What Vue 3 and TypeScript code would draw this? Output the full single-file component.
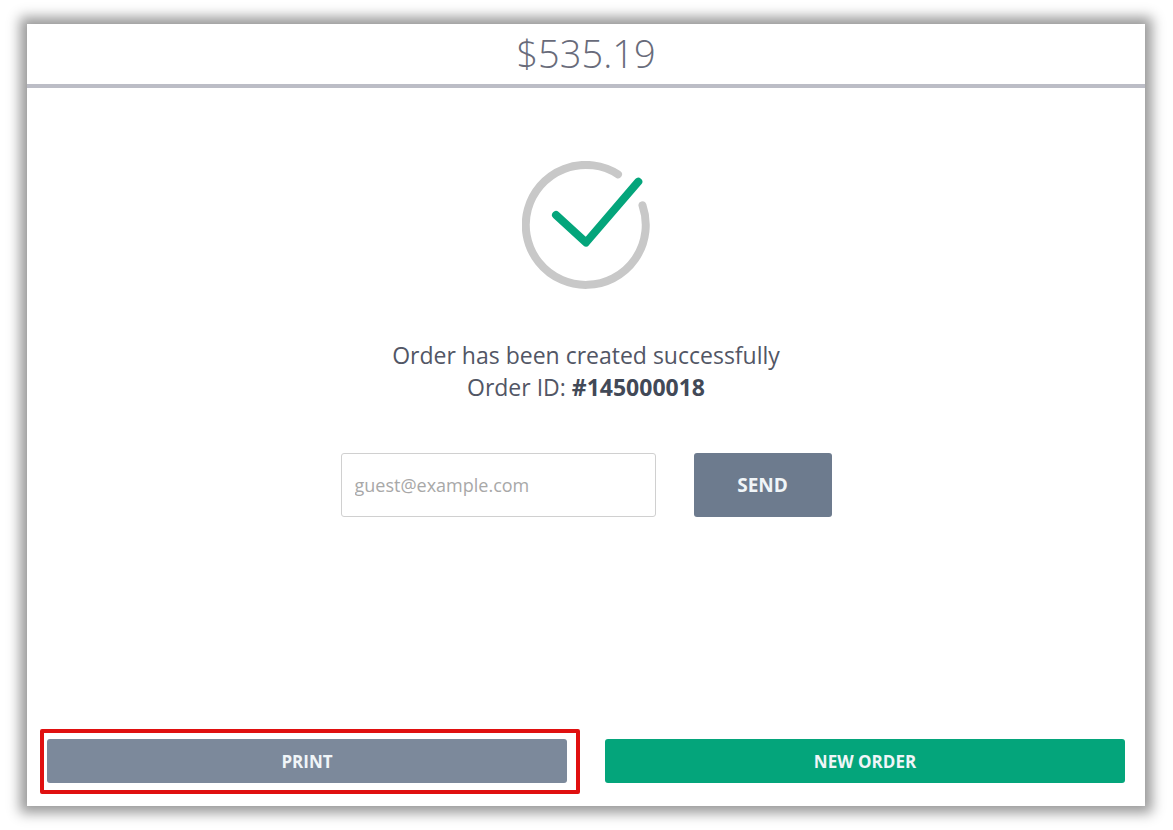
<script setup lang="ts">
import { ref } from 'vue'

const total = '$535.19'
const orderId = '#145000018'
const email = ref('')
</script>

<template>
  <div class="page">
    <main class="panel">
      <header class="total">
        <h1>{{ total }}</h1>
      </header>
      <section class="result">
        <svg class="check" viewBox="0 0 128 128" fill="none" stroke-width="8" stroke-linecap="round" aria-hidden="true">
          <path class="ring" d="M96 13.3A60 60 0 1 0 120.5 44.4" />
          <path class="tick" d="M34 54L64 81.5L116.3 20.7" stroke-linejoin="round" />
        </svg>
        <p class="message">
          Order has been created successfully<br />
          Order ID: <strong>{{ orderId }}</strong>
        </p>
        <form class="receipt" @submit.prevent>
          <input v-model="email" type="email" placeholder="guest@example.com" aria-label="Email address" />
          <button type="submit" class="send">SEND</button>
        </form>
      </section>
      <footer class="actions">
        <div class="highlight">
          <button type="button" class="print">PRINT</button>
        </div>
        <button type="button" class="new-order">NEW ORDER</button>
      </footer>
    </main>
  </div>
</template>

<style>
body {
  margin: 0;
  background: #fff;
}
</style>

<style scoped>
.page {
  box-sizing: border-box;
  min-height: 100vh;
  padding: 24px 28px 24px 27px;
  display: flex;
  font-family: "Open Sans", "Noto Sans", sans-serif;
  color: #525665;
}

.panel {
  flex: 1;
  display: flex;
  flex-direction: column;
  background: #fff;
  box-shadow: 0 0 12px 7px #999;
}

.total {
  height: 60px;
  display: flex;
  justify-content: center;
  border-bottom: 4px solid #bcbdc6;
}

h1 {
  margin: 0;
  font-size: 38px;
  font-weight: 300;
  line-height: 58px;
  color: #686b7a;
}

.result {
  flex: 1;
  display: flex;
  flex-direction: column;
  align-items: center;
  padding: 73px 20px 40px;
}

.check {
  width: 128px;
  height: 128px;
}

.ring {
  stroke: #c8c8c8;
}

.tick {
  stroke: #04a57b;
}

.message {
  margin: 50px 0;
  font-size: 23px;
  line-height: 32px;
  text-align: center;
}

.message strong {
  font-weight: 700;
  color: #424957;
}

.receipt {
  display: flex;
  gap: 38px;
}

input {
  box-sizing: border-box;
  width: 315px;
  height: 64px;
  padding: 0 13px;
  border: 1px solid #d0d0d0;
  border-radius: 3px;
  background: #fff;
  font: 400 18px "Open Sans", "Noto Sans", sans-serif;
  color: #525665;
}

input::placeholder {
  color: #a8a8a8;
  opacity: 1;
}

button {
  border: 0;
  border-radius: 3px;
  padding: 0;
  font: 700 17px "Open Sans", "Noto Sans", sans-serif;
  color: #f0f5f8;
  cursor: pointer;
}

.send {
  width: 138px;
  font-size: 19px;
  background: #6d7b8e;
}

.actions {
  display: grid;
  grid-template-columns: 1fr 1fr;
  gap: 38px;
  padding: 0 20px 23px;
}

.highlight {
  position: relative;
  display: grid;
}

.highlight::after {
  content: "";
  position: absolute;
  inset: -10px -13px -11px -7px;
  border: 4px solid #e01010;
  border-radius: 2px;
  pointer-events: none;
}

.print,
.new-order {
  height: 44px;
}

.print {
  background: #7c899b;
}

.new-order {
  background: #04a57b;
}
</style>
